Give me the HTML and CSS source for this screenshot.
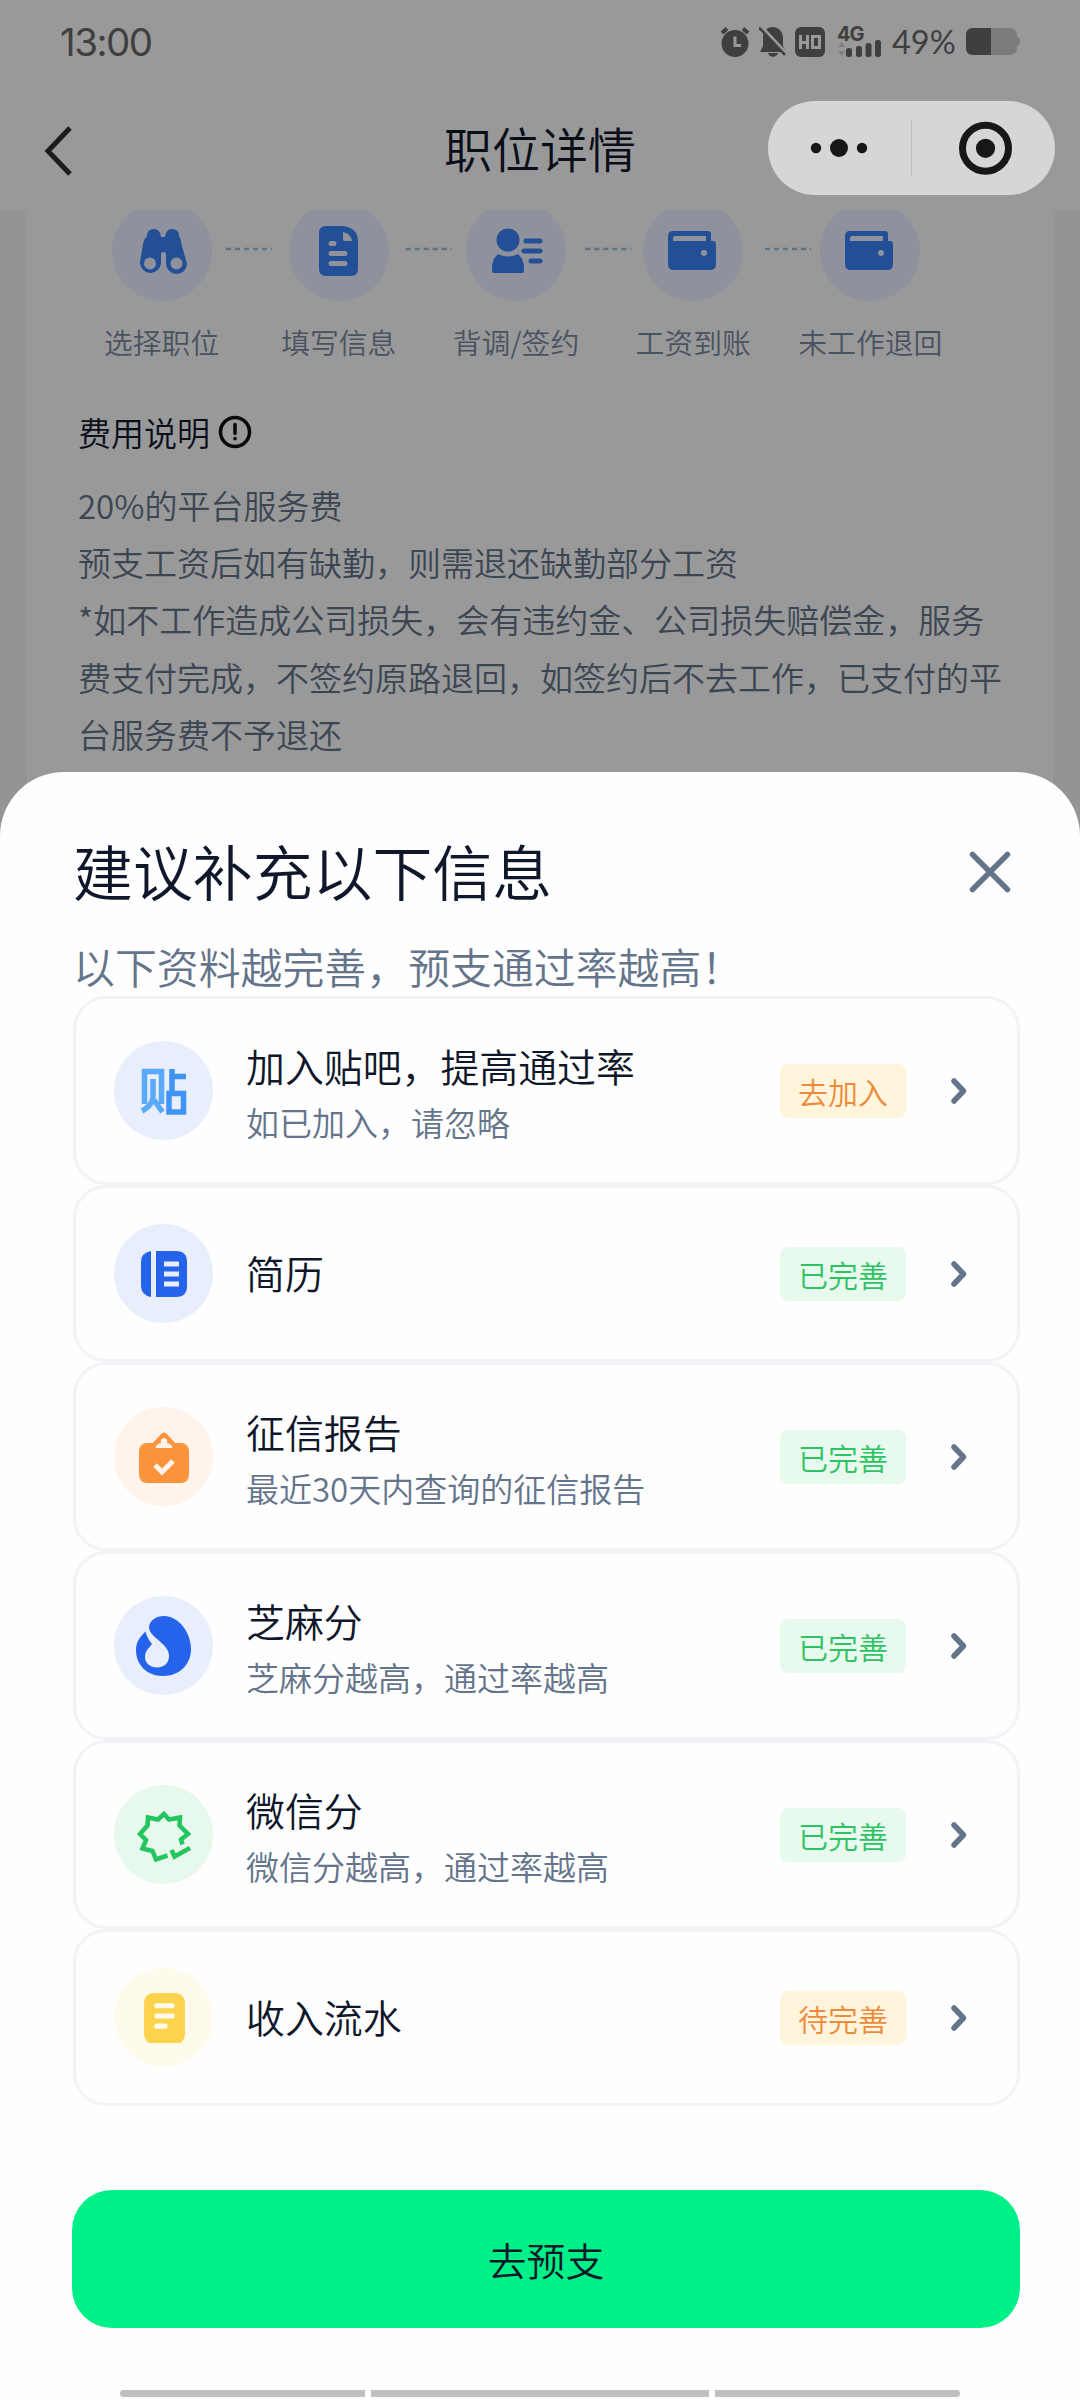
FILE: index.html
```html
<!DOCTYPE html>
<html lang="zh-CN">
<head>
<meta charset="utf-8">
<title>职位详情</title>
<link rel="stylesheet" href="styles.css">
</head>
<body>
<div class="screen">
  <header class="top">
    <div class="status">
      <span class="time">13:00</span>
      <div class="status-right">
        <svg class="ic-alarm" width="30" height="32" viewBox="0 0 30 32"><circle cx="15" cy="17.500" r="13.500"/><path class="cut" d="M15 10.500v9h6"/><path class="edge" d="M2 7l5-4.500M28 7l-5-4.500"/></svg>
        <svg class="ic-bell" width="28" height="32" viewBox="0 0 28 32"><path d="M4 12C4 5 8 1 13.500 1S24 5 24 12v8l3 6H1l3-6z"/><path d="M9 27h10c-1 5-9 5-10 0z"/><path class="cut" d="M1 -1l29 31"/><path class="edge slim" d="M0 1.500l26 27.500"/></svg>
        <svg class="ic-hd" width="30" height="30" viewBox="0 0 30 30"><rect width="30" height="30" rx="6"/><path class="cut" d="M5.500 8v14M12.500 8v14M5.500 15.500h7M17.500 9.500h7v11h-7z"/></svg>
        <div class="signal"><span class="net">4G</span>
          <svg width="45" height="17" viewBox="0 0 45 17"><path class="faint" d="M4.500 2l3.500 5H1zM4.500 16l3.500-5H1z"/><rect x="9" y="8" width="6" height="9" rx="2.500"/><rect x="19" y="6" width="6" height="11" rx="2.500"/><rect x="28.500" y="3" width="6" height="14" rx="2.500"/><rect x="38" y="0" width="6" height="17" rx="2.500"/></svg>
        </div>
        <span class="pct">49%</span>
        <svg class="ic-bat" width="54" height="28" viewBox="0 0 54 28"><rect class="dim" width="51" height="27" rx="7"/><path class="dim" d="M51 9q3 0 3 4.500t-3 4.500z"/><path d="M7 0h18v27H7q-7 0-7-7V7q0-7 7-7z"/></svg>
      </div>
    </div>
    <nav class="nav">
      <svg class="back" width="30" height="52" viewBox="0 0 30 52"><path d="M26 3L4 26l22 23"/></svg>
      <h1>职位详情</h1>
      <div class="capsule">
        <svg width="287" height="94" viewBox="0 0 287 94"><circle cx="48" cy="47" r="5.200"/><circle cx="71" cy="47" r="9"/><circle cx="94" cy="47" r="5.200"/><path class="split" d="M143.500 19v57"/><circle class="ring" cx="217.500" cy="47.300" r="23"/><circle cx="217.500" cy="47.300" r="9.600"/></svg>
      </div>
    </nav>
  </header>

  <main class="page">
    <section class="card">
      <div class="steps">
        <svg class="links" width="590" height="4" viewBox="0 0 590 4"><path d="M0 2h46M179.700 2h46M359.300 2h46M539 2h46"/></svg>
        <div class="step"><i><svg width="50" height="50" viewBox="-1 0 50 50"><path d="M9 10q0-7 7-7 6 0 7 8h4q1-8 7-8 7 0 7 7 2 3 2.500 8L49 38a10.500 10.500 0 1 1-21-1V28q0-2-2.500-2T23 28v9a10.500 10.500 0 1 1-21-1L5 18q1-5 4-8z"/><circle class="hole" cx="12" cy="37.500" r="6"/><circle class="hole" cx="38.500" cy="37.500" r="6"/></svg></i><span>选择职位</span></div>
        <div class="step"><i><svg width="50" height="50" viewBox="0 0 50 50"><path d="M12 0h17q15 2 15 15v28q0 7-7 7H12q-7 0-7-7V7q0-7 7-7z"/><path class="hole" d="M29 6q8 2 9 9h-7q-2 0-2-2z"/><path class="line" d="M17 17.500h3M17 27.500h14M17 37.500h14"/></svg></i><span>填写信息</span></div>
        <div class="step"><i><svg width="54" height="50" viewBox="-1 0 54 50"><circle cx="18" cy="14" r="11.500"/><path d="M8 28q10 5 20 0 6 5 6 14v3q0 2-2 2H4q-2 0-2-2v-3q0-9 6-14z"/><path class="bars" d="M36 15h14M34 25h16M41 35h9"/></svg></i><span>背调/签约</span></div>
        <div class="step"><i><svg width="50" height="50" viewBox="2 0 50 50"><path d="M7 5h35q3 0 3 3v7h2q3 0 3 3v20q0 6-6 6H8q-6 0-6-6V10q0-5 5-5z"/><path class="hole" d="M9 10h31v5H7v-3q0-2 2-2z"/><circle class="hole" cx="38" cy="27" r="3"/></svg></i><span>工资到账</span></div>
        <div class="step"><i><svg width="50" height="50" viewBox="2 0 50 50"><path d="M7 5h35q3 0 3 3v7h2q3 0 3 3v20q0 6-6 6H8q-6 0-6-6V10q0-5 5-5z"/><path class="hole" d="M9 10h31v5H7v-3q0-2 2-2z"/><circle class="hole" cx="38" cy="27" r="3"/></svg></i><span>未工作退回</span></div>
      </div>
      <h2 class="fee">费用说明<svg width="34" height="34" viewBox="0 0 34 34"><circle cx="17" cy="17" r="14.500"/><path d="M17 9.500v9M17 23.500v.2"/></svg></h2>
      <p class="terms">20%的平台服务费<br>预支工资后如有缺勤，则需退还缺勤部分工资<br>*如不工作造成公司损失，会有违约金、公司损失赔偿金，服务<br>费支付完成，不签约原路退回，如签约后不去工作，已支付的平<br>台服务费不予退还</p>
    </section>
  </main>

  <section class="sheet">
    <div class="sheet-head">
      <h2>建议补充以下信息</h2>
      <svg class="close" width="44" height="44" viewBox="0 0 44 44"><path d="M4.500 4.500l35 35M39.500 4.500l-35 35"/></svg>
    </div>
    <p class="lead">以下资料越完善，预支通过率越高！</p>
    <ul class="list">
      <li class="item tall">
        <i class="blue"><svg width="50" height="50" viewBox="0 0 50 50"><g fill="none" stroke-width="5.500"><path stroke="#5aa9fb" d="M5.500 38V5.500h17V38M14 13v17q0 9-11 15M15 34l8.500 12"/><path stroke="#3f93f5" d="M33 3v24M33 10.500h14M30 27.500h14.500v18.500H30z"/></g></svg></i>
        <div class="txt"><b>加入贴吧，提高通过率</b><span>如已加入，请忽略</span></div>
        <em class="todo">去加入</em><svg class="go" width="20" height="30" viewBox="0 0 20 30"><path d="M5 5l9.500 10L5 25"/></svg>
      </li>
      <li class="item">
        <i class="blue"><svg width="50" height="50" viewBox="0 0 50 50"><g fill="#2563eb"><path d="M12 2v46Q2 46 2 37V13Q2 4 12 2z"/><path d="M17 2h20q11 0 11 11v24q0 11-11 11H17z"/></g><path fill="none" stroke="#e8eefc" stroke-width="5" d="M25 15h15M25 25h15M25 35h15"/></svg></i>
        <div class="txt"><b>简历</b></div>
        <em class="done">已完善</em><svg class="go" width="20" height="30" viewBox="0 0 20 30"><path d="M5 5l9.500 10L5 25"/></svg>
      </li>
      <li class="item tall">
        <i class="orange"><svg width="52" height="54" viewBox="0 0 52 54"><path fill="#fb923c" d="M10 13h5L23 4q3-3 6 0l8 9h5q9 0 9 9v22q0 9-9 9H10q-9 0-9-9V22q0-9 9-9z"/><path fill="#fff3ea" d="M26 8a3.500 3.500 0 0 1 3 5q5 1 5.500 5h-17q.5-4 5.500-5a3.500 3.500 0 0 1 3-5z"/><path fill="none" stroke="#fff3ea" stroke-width="5" d="M17 35l7 7 11-11"/></svg></i>
        <div class="txt"><b>征信报告</b><span>最近30天内查询的征信报告</span></div>
        <em class="done">已完善</em><svg class="go" width="20" height="30" viewBox="0 0 20 30"><path d="M5 5l9.500 10L5 25"/></svg>
      </li>
      <li class="item tall">
        <i class="blue"><svg width="56" height="60" viewBox="0 0 56 60"><path fill="#2563eb" d="M13 11C14 4 20 0 28 0c15 0 27 17 27 33 0 16-12 27-28 27S0 49 0 34c0-8 4-13 9.500-18.500Q11 22 16 28c-3 4-7 7-7 13 0 6 5 10.500 12 10.500S33 47 33 40c0-6-4-10-9-14.500S13 17 13 11z"/></svg></i>
        <div class="txt"><b>芝麻分</b><span>芝麻分越高，通过率越高</span></div>
        <em class="done">已完善</em><svg class="go" width="20" height="30" viewBox="0 0 20 30"><path d="M5 5l9.500 10L5 25"/></svg>
      </li>
      <li class="item tall">
        <i class="green"><svg width="54" height="54" viewBox="-1 -3 54 54"><path fill="none" stroke="#22c55e" stroke-width="4.500" d="M29.500 44.500L18 48.500l-3.500-8.500-10-2.500L8 29 2 23l7.500-8.500.5-8 10 2L26 3l5 5.500 11-2-.5 8L50 23l-7 5.500 1.500 5M33.500 39l3 6.500L52 37"/></svg></i>
        <div class="txt"><b>微信分</b><span>微信分越高，通过率越高</span></div>
        <em class="done">已完善</em><svg class="go" width="20" height="30" viewBox="0 0 20 30"><path d="M5 5l9.500 10L5 25"/></svg>
      </li>
      <li class="item">
        <i class="yellow"><svg width="42" height="51" viewBox="-1 -1 41 50"><rect width="40" height="50" rx="9" fill="#fcd34d"/><path fill="none" stroke="#fffbeb" stroke-width="5" stroke-linecap="round" d="M12.500 12.500h15M12.500 22.500h15M12.500 32.500h8"/></svg></i>
        <div class="txt"><b>收入流水</b></div>
        <em class="todo">待完善</em><svg class="go" width="20" height="30" viewBox="0 0 20 30"><path d="M5 5l9.500 10L5 25"/></svg>
      </li>
    </ul>
    <button class="cta">去预支</button>
    <div class="keys"><span></span><span class="mid"></span><span></span></div>
  </section>
</div>
</body>
</html>
```
FILE: styles.css
```css
* { box-sizing: border-box; margin: 0; padding: 0; }
body { background: #999; font-family: "Noto Sans CJK SC", sans-serif; font-weight: 350; }
h1, h2, b { font-weight: inherit; }
i, em { font-style: normal; }
svg { display: block; flex: none; }
.screen { width: 1080px; height: 2400px; overflow: hidden; display: flex; flex-direction: column; background: #939496; }

.top { height: 210px; flex: none; background: #999; }
.status { height: 84px; padding: 0 60px; display: flex; justify-content: space-between; align-items: center; color: #3f3f3f; }
.time { font: 400 38.500px/44px Inter, sans-serif; letter-spacing: -1.500px; }
.status-right { display: flex; align-items: center; fill: #3f3f3f; }
.status-right .cut { fill: none; stroke: #999; stroke-width: 3; }
.edge { fill: none; stroke: #3f3f3f; stroke-width: 4; }
.status-right .slim { stroke-width: 2.500; }
.ic-bell { margin-left: 9px; }
.ic-hd { margin-left: 8px; }
.signal { margin-left: 12px; width: 45px; height: 30px; display: flex; flex-direction: column; justify-content: space-between; }
.net { font: 700 20px/14px Inter, sans-serif; height: 13px; letter-spacing: -1px; }
.faint { fill: #808080; }
.pct { width: 64px; margin-left: 10px; font: 400 32.500px/36px Lato, sans-serif; white-space: nowrap; }
.ic-bat { margin-left: 10px; }
.dim { fill: #7b7b7b; }
.nav { height: 126px; padding: 17px 25px 0 44px; display: grid; grid-template-columns: 287px 1fr 287px; align-items: start; }
.back { margin-top: 24px; fill: none; stroke: #1c1c1c; stroke-width: 5; }
.nav h1 { font-size: 48px; line-height: 70px; margin: 11px 19px 0 0; text-align: center; color: #0a0e19; }
.capsule { width: 287px; height: 94px; border-radius: 47px; background: #d6d6d6; fill: #171717; }
.split { stroke: #bdbdbd; stroke-width: 1; }
.ring { fill: none; stroke: #171717; stroke-width: 7; }

.page { height: 642px; flex: none; padding: 0 27px; overflow: hidden; }
.card { height: 660px; background: #999; padding: 0 46px; overflow: hidden; }
.steps { position: relative; display: flex; margin: -9px 0 0; }
.links { position: absolute; left: 153px; top: 46px; fill: none; stroke: #5d7389; stroke-width: 2.500; stroke-dasharray: 5 4; }
.step { width: 177.200px; flex: none; display: flex; flex-direction: column; align-items: center; }
.step i { width: 100px; height: 100px; border-radius: 50%; background: #8f929c; display: grid; place-items: center; fill: #224f96; }
.step .hole { fill: #8f929c; }
.step .line { fill: none; stroke: #8f929c; stroke-width: 5; stroke-linecap: round; }
.step .bars { fill: none; stroke: #224f96; stroke-width: 5; stroke-linecap: round; }
.step span { margin-top: 19px; font-size: 28.800px; line-height: 44px; color: #4a5261; white-space: nowrap; }
.fee { display: flex; align-items: center; gap: 8px; margin: 44px 0 0 5px; font-size: 33px; line-height: 48px; color: #090e19; }
.fee svg { fill: none; stroke: #080808; stroke-width: 3.500; stroke-linecap: round; }
.terms { margin: 21px 0 0 5px; font-size: 33px; line-height: 57.200px; color: #3c4653; white-space: nowrap; }

.sheet { margin-top: -80px; height: 1628px; flex: none; position: relative; background: #fefefe; border-radius: 64px 64px 0 0; padding: 61px 60px 0 73px; }
.sheet-head { height: 74px; padding-right: 8px; display: flex; justify-content: space-between; align-items: center; }
.sheet-head h2 { font-size: 59.900px; line-height: 74px; color: #0f172a; }
.close { margin-top: 4px; fill: none; stroke: #64748b; stroke-width: 5.500; stroke-linecap: round; }
.lead { margin-top: 29px; height: 60px; font-size: 41.900px; line-height: 60px; color: #64748b; }
.list { list-style: none; width: 947px; }
.item { height: 177px; border: 3px solid #f2f3f7; border-radius: 33px; background: #fefefe; padding: 0 48px 0 38px; display: flex; align-items: center; }
.item.tall { height: 189px; }
.item i { width: 99px; height: 99px; border-radius: 50%; display: grid; place-items: center; flex: none; }
.blue { background: #e8eefc; }
.orange { background: #fff3ea; }
.green { background: #e7f8ed; }
.yellow { background: #fffbec; }
.txt { flex: 1; margin-left: 33px; padding-bottom: 3px; display: flex; flex-direction: column; color: #0f172a; }
.tall .txt { padding: 6px 0 0; }
.txt b { font-size: 38.900px; line-height: 56px; }
.txt span { font-size: 33px; line-height: 58px; color: #64748b; }
.item em { width: 126px; height: 54px; border-radius: 8px; font-size: 30px; line-height: 54px; text-align: center; }
.todo { background: #fef5dc; color: #ee8b3b; }
.done { background: #e8f9ee; color: #2fc265; }
.go { margin-left: 43px; fill: none; stroke: #64748b; stroke-width: 5.500; stroke-linecap: round; stroke-linejoin: round; }
.cta { display: block; margin: 84px 0 0 -1px; width: 948px; height: 138px; border: 0; border-radius: 40px; background: #00f088; color: #0f172a; font: 350 38.800px/135px "Noto Sans CJK SC", sans-serif; }
.keys { margin: 62px 0 0 47px; width: 840px; height: 7px; display: flex; gap: 6px; }
.keys span { width: 245px; background: #c0c0c0; border-radius: 4px 0 0 4px; }
.keys .mid { width: 338px; border-radius: 0; }
.keys span:last-child { border-radius: 0 4px 4px 0; }
```
